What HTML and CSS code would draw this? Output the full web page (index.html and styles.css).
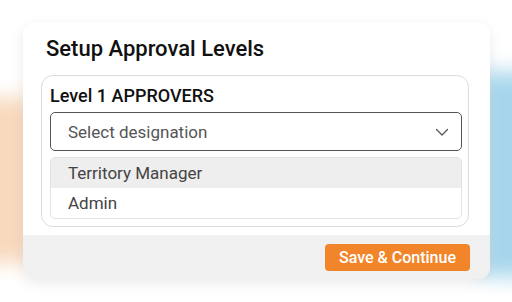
FILE: index.html
```html
<!DOCTYPE html>
<html lang="en">
<head>
    <meta charset="UTF-8">
    <meta name="viewport" content="width=device-width, initial-scale=1.0">
    <title>Setup Approval Levels</title>
    <link rel="stylesheet" href="styles.css">
</head>
<body>
    <div class="stage">
        <div class="glow glow-left"></div>
        <div class="glow glow-right"></div>

        <div class="card">
            <div class="card-body">
                <h1>Setup Approval Levels</h1>

                <div class="level-box">
                    <div class="level-label">Level 1 APPROVERS</div>
                    <div class="select">
                        <span>Select designation</span>
                        <svg class="chevron" width="14" height="14" viewBox="0 0 14 14">
                            <path d="M1.5 4.5l5.5 5.5 5.5-5.5" fill="none" stroke="#555" stroke-width="1.3" stroke-linecap="round" stroke-linejoin="round"/>
                        </svg>
                    </div>
                    <ul class="options">
                        <li class="active">Territory Manager</li>
                        <li>Admin</li>
                    </ul>
                </div>
            </div>

            <div class="card-footer">
                <button class="btn-primary">Save &amp; Continue</button>
            </div>
        </div>
    </div>
</body>
</html>
```

FILE: styles.css
```css
body {
    margin: 0;
    padding: 0;
    background: #fff;
    font-family: 'Roboto', 'Liberation Sans', sans-serif;
    color: #111;
}
.stage {
    position: relative;
    width: 512px;
    height: 302px;
    overflow: hidden;
    padding: 22px 0 0 23px;
    box-sizing: border-box;
}
.glow {
    position: absolute;
    filter: blur(10px);
}
.glow-left {
    left: -20px;
    top: 98px;
    width: 55px;
    height: 165px;
    background: #f8d9bd;
}
.glow-right {
    right: -20px;
    top: 72px;
    width: 50px;
    height: 205px;
    background: #a6d6ec;
}
.card {
    position: relative;
    width: 467px;
    height: 257px;
    background: #fff;
    border-radius: 12px;
    overflow: hidden;
    box-shadow: 0 4px 14px rgba(0, 0, 0, 0.08);
    display: flex;
    flex-direction: column;
}
.card-body {
    padding: 14px 21px 8px 18px;
}
h1 {
    margin: 0 0 13px 5px;
    font-size: 22px;
    line-height: 26px;
    font-weight: 500;
    color: #111;
}
.level-box {
    border: 1px solid #dcdcdc;
    border-radius: 12px;
    padding: 9px 6px 7px 8px;
}
.level-label {
    font-size: 18px;
    line-height: 22px;
    font-weight: 500;
    margin-bottom: 5px;
}
.select {
    height: 37px;
    border: 1px solid #555;
    border-radius: 5px;
    display: flex;
    align-items: center;
    justify-content: space-between;
    padding: 0 12px 0 17px;
    font-size: 17px;
    color: #555;
    margin-bottom: 6px;
}
.options {
    list-style: none;
    margin: 0;
    padding: 0;
    border: 1px solid #e2e2e2;
    border-radius: 5px;
    overflow: hidden;
}
.options li {
    height: 30px;
    line-height: 30px;
    padding-left: 17px;
    font-size: 17px;
    color: #444;
}
.options li.active {
    background: #eee;
}
.card-footer {
    flex: 1;
    background: #f0f0f0;
    display: flex;
    justify-content: flex-end;
    align-items: flex-start;
    padding: 9px 20px 0 0;
}
.btn-primary {
    height: 27px;
    padding: 0 14px;
    border: none;
    border-radius: 4px;
    background: #f28529;
    color: #fff;
    font-family: 'Roboto', 'Liberation Sans', sans-serif;
    font-size: 16px;
    font-weight: 500;
}
```
